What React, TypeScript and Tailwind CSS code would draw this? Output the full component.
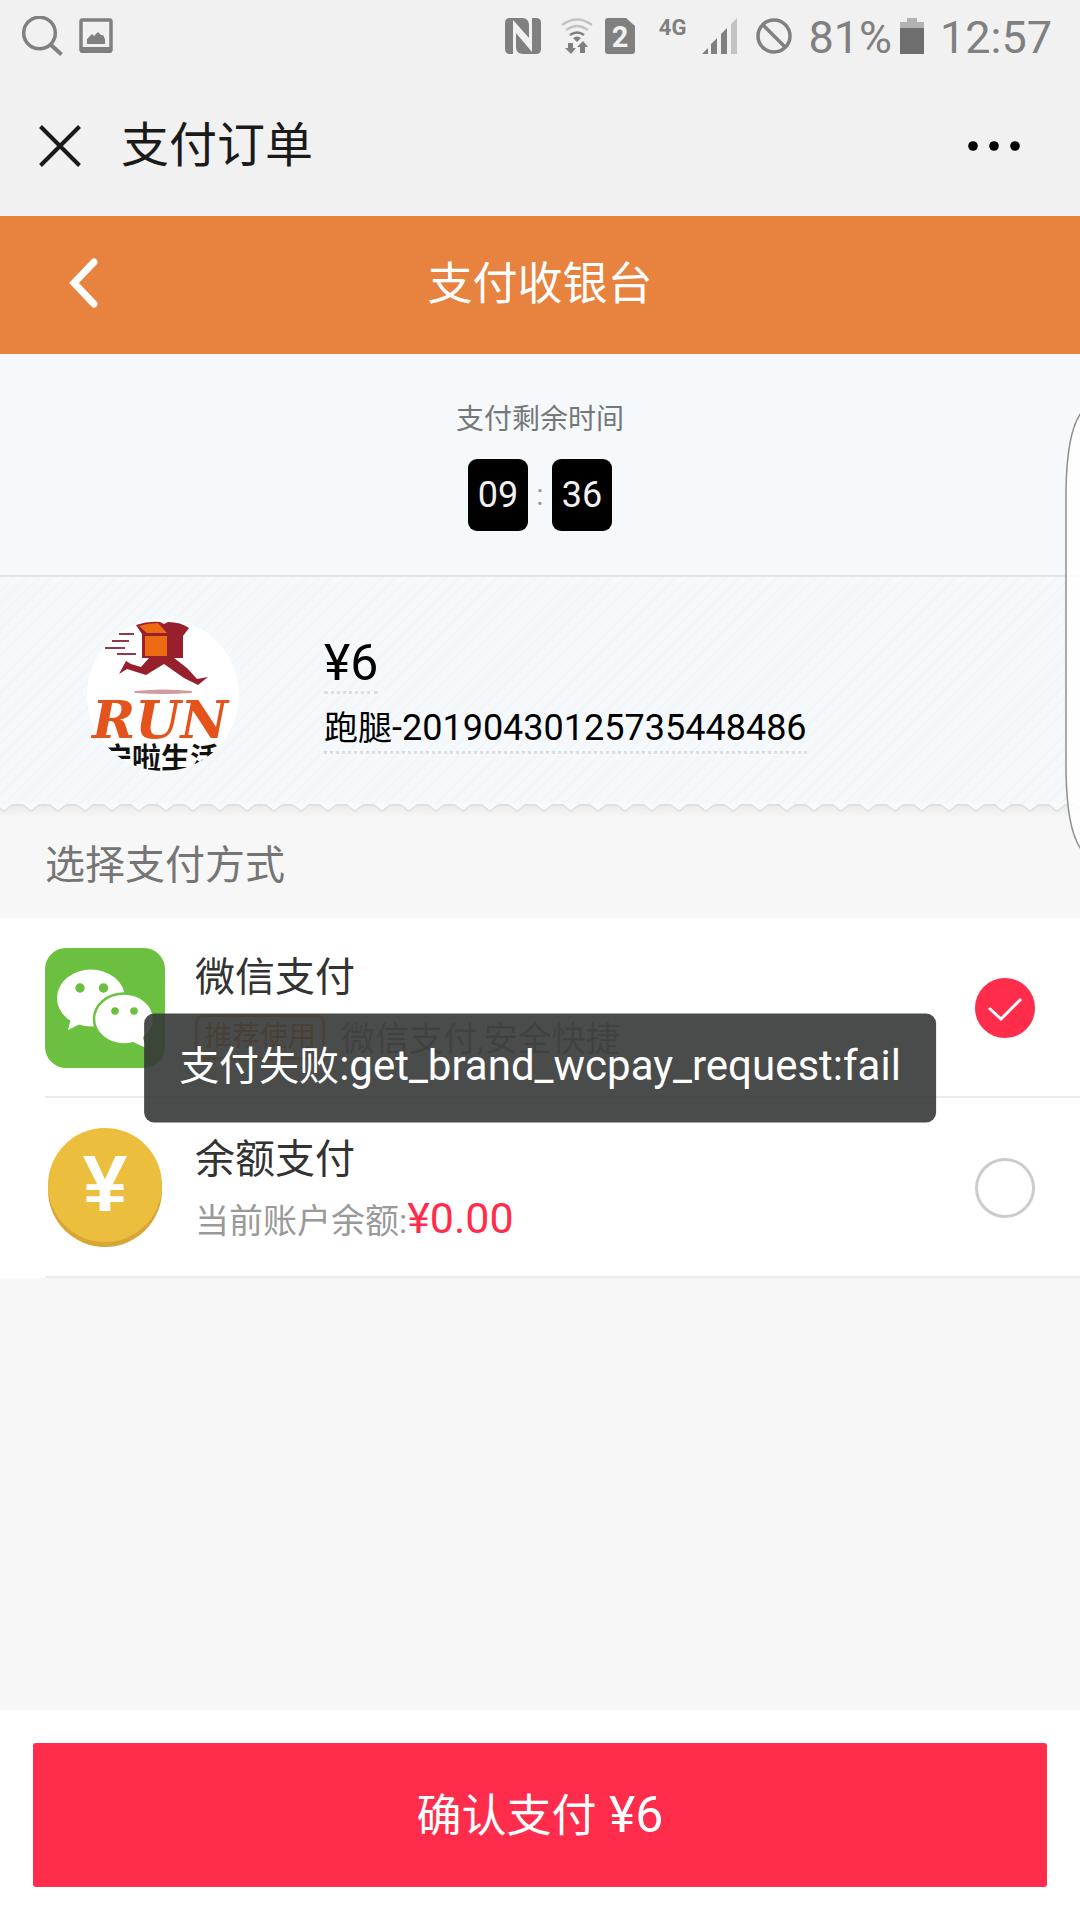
import React, { useState } from "react";

type Method = "wechat" | "balance";

function StatusBar() {
    return (
        <div className="flex h-[72px] items-center pr-7 pl-[21px] text-[#808080]">
            <svg className="h-10 w-[42px]" viewBox="0 0 42 40" fill="none" stroke="currentColor">
                <circle cx="18.500" cy="17" r="15.800" strokeWidth="3.500" />
                <path d="M30 29l10.500 9.500" strokeWidth="4" />
            </svg>
            <svg className="ml-4 h-9 w-[34px]" viewBox="0 0 34 36">
                <rect x="2" y="2" width="30" height="31" rx="1.500" fill="none" stroke="currentColor" strokeWidth="3.500" />
                <path fill="currentColor" d="M1 29h32v4q0 2-2 2H3q-2 0-2-2zM8 21l5-5 2 2 4-4 3 3h2l2 4v5H8z" />
            </svg>

            <div className="ml-auto flex items-center">
                {/* nfc */}
                <svg className="h-9 w-9" viewBox="0 0 36 36">
                    <path
                        fill="currentColor"
                        d="M5 0h13q6 1 6 7v13L8 2v34H5q-5 0-5-5V5q0-5 5-5zM27 0h4q5 0 5 5v26q0 5-5 5H18q-7 0-7-7V15l16 19z"
                    />
                </svg>
                {/* wifi with traffic arrows */}
                <svg className="ml-5 h-9 w-8" viewBox="0 0 32 36" fill="none" stroke="currentColor" strokeWidth="2.500">
                    <path d="M1 7q15-11 30 0M5 12q11-8 22 0" opacity="0.400" />
                    <path d="M9 17q7-5 14 0" />
                    <path d="M12 20q4-3 8 0l-4 4z" fill="currentColor" stroke="none" />
                    <path d="M7 25h5v5h3l-5 6-6-6h3zM19 35h5v-6h3l-5-6-6 6h3z" fill="currentColor" stroke="none" />
                </svg>
                <svg className="ml-3 h-9 w-[30px]" viewBox="0 0 30 36">
                    <path fill="currentColor" d="M3 0h18l9 8v25q0 3-3 3H3q-3 0-3-3V3q0-3 3-3z" />
                    <text x="15" y="29" textAnchor="middle" fill="#f1f1f1" className="font-['Roboto',sans-serif] text-[29px] font-bold">
                        2
                    </text>
                </svg>
                <span className="mb-4 ml-6 text-[22px] leading-6 font-bold">4G</span>
                <svg className="ml-4 h-9 w-9" viewBox="0 0 36 36" fill="currentColor">
                    <path d="M0 36l6-6v6zM9 26l6-6v16H9zM19 16l6-6v26h-6z" />
                    <path d="M29 6l6-6v36h-6z" opacity="0.400" />
                </svg>
                <svg className="ml-[18px] h-9 w-9" viewBox="0 0 36 36" fill="none" stroke="currentColor" strokeWidth="3.500">
                    <circle cx="18" cy="18" r="16" />
                    <path d="M7 7l22 22" />
                </svg>
                <span className="mt-1 ml-4 text-[45px] leading-[48px]">81%</span>
                <svg className="ml-2 h-9 w-6" viewBox="0 0 24 36">
                    <path fill="#b2b2b2" d="M7 0h10v4h7v8H0V4h7z" />
                    <path fill="#6e6e6e" d="M0 10h24v26H0z" />
                </svg>
                <span className="mt-1 ml-4 text-[45px] leading-[48px]">12:57</span>
            </div>
        </div>
    );
}

function TitleBar() {
    return (
        <header className="flex h-36 items-center px-[39px] pt-[3px] text-black">
            <button aria-label="关闭">
                <svg className="size-[42px]" viewBox="0 0 42 42" stroke="#1a1a1a" strokeWidth="4">
                    <path d="M1.500 1.500l39 39M40.500 1.500l-39 39" />
                </svg>
            </button>
            <h1 className="ml-10 text-[48px] leading-[60px] text-[#1a1a1a]">支付订单</h1>
            <button aria-label="更多" className="ml-auto pr-5">
                <svg className="h-3 w-[54px]" viewBox="0 0 54 12">
                    <circle cx="6" cy="6" r="4.800" />
                    <circle cx="27" cy="6" r="4.800" />
                    <circle cx="48" cy="6" r="4.800" />
                </svg>
            </button>
        </header>
    );
}

function RunLogo() {
    return (
        <svg className="size-[152px]" viewBox="0 0 152 152" role="img" aria-label="RUN">
            <defs>
                <clipPath id="logoClip">
                    <circle cx="76" cy="76" r="76" />
                </clipPath>
            </defs>
            <circle cx="76" cy="76" r="76" fill="#fff" />
            <path stroke="#8f3a44" strokeWidth="2" d="M32 15h15M25 22h17M18 29h20M30 35h19" />
            {/* open parcel */}
            <path fill="#97202c" d="M49 6q12-4 24-3l4 2 4-2q13 0 21 6l-6 8v22H55V15z" />
            <path fill="#ee6a12" d="M58 17h22v20H58zM52 7q9-3 19-3l9 10H60z" />
            {/* legs */}
            <path
                fill="#97202c"
                d="M32 55l7-13 5 3 10 3 8-9h25l13 10 10 11 11-2-10 8-14-7-20-14-18 11-19-6z"
            />
            <path fill="#d39ba0" d="M47 72q29-3 58 0 0 2-1 2-28 2-56 0z" />
            <text x="5" y="119" fill="#e4531c" className="font-['DejaVu_Serif',serif] text-[52px] font-bold italic">
                RUN
            </text>
            <g clipPath="url(#logoClip)">
                <text x="16" y="150" fill="#111" className="font-['Noto_Sans_CJK_SC',sans-serif] text-[29px] font-bold">
                    宁啦生活
                </text>
            </g>
        </svg>
    );
}

function Countdown() {
    return (
        <section className="flex h-[223px] flex-col items-center border-b-2 border-[#e0e4e7] bg-[#f5f9fc] pt-[45px] text-[#757777]">
            <p className="text-[28px] leading-[42px]">支付剩余时间</p>
            <div className="mt-[18px] flex items-center text-[36px] leading-[72px]">
                <span className="w-[60px] rounded-[9px] bg-black text-center text-[#f1f1f1]">09</span>
                <span className="w-6 text-center text-[30px] text-[#999]">:</span>
                <span className="w-[60px] rounded-[9px] bg-black text-center text-[#f1f1f1]">36</span>
            </div>
        </section>
    );
}

function OrderInfo() {
    return (
        <section className="flex h-[227px] items-center bg-[repeating-linear-gradient(135deg,#f2f6f9_0px,#f2f6f9_2px,#f5f9fc_2px,#f5f9fc_9px)] pt-2 pl-[87px] text-black">
            <RunLogo />
            <div className="ml-[85px] flex flex-col items-start">
                <p className="border-b-3 border-dotted border-[#dcdfe0] text-[50px] leading-[55px]">¥6</p>
                <p className="border-b-3 border-dotted border-[#dcdfe0] pt-3 text-[36px] leading-[45px]">
                    <span className="text-[34px]">跑腿</span>-20190430125735448486
                </p>
            </div>
        </section>
    );
}

// torn ticket edge under the order
function TornEdge() {
    return (
        <svg className="block h-3 w-full" aria-hidden="true">
            <defs>
                <linearGradient id="edgeShade" x1="0" y1="0" x2="0" y2="1">
                    <stop offset="0" stopColor="#e9e9e9" />
                    <stop offset="1" stopColor="#f6f6f6" />
                </linearGradient>
                <pattern id="tooth" x="17" width="27" height="12" patternUnits="userSpaceOnUse">
                    <path d="M0 1h6q3 1 5 4 3 4 6 0 2-3 5-4h5" fill="#f8fafb" stroke="#e0e0e0" strokeWidth="2" />
                    <path d="M6 0h16l-5 4q-3 3-6 0z" fill="#f8fafb" />
                </pattern>
            </defs>
            <rect width="100%" height="12" fill="url(#edgeShade)" />
            <rect width="100%" height="12" fill="url(#tooth)" />
        </svg>
    );
}

function WechatIcon() {
    return (
        <svg className="size-[120px] shrink-0" viewBox="0 0 120 120" aria-hidden="true">
            <rect width="120" height="120" rx="21" fill="#6bc13f" />
            <ellipse cx="46" cy="50" rx="34" ry="28.500" fill="#fff" />
            <path d="M26 70l-3 12 14-7z" fill="#fff" />
            <circle cx="35" cy="40" r="4.700" fill="#6bc13f" />
            <circle cx="58.500" cy="40" r="4.700" fill="#6bc13f" />
            <ellipse cx="79" cy="71" rx="30" ry="25.500" fill="#fff" stroke="#6bc13f" strokeWidth="2.500" />
            <path d="M86 93l15 7-4-14z" fill="#fff" />
            <circle cx="70" cy="63" r="3.800" fill="#6bc13f" />
            <circle cx="89" cy="63" r="3.800" fill="#6bc13f" />
        </svg>
    );
}

function CoinIcon() {
    return (
        <svg className="size-[120px] shrink-0" viewBox="0 0 120 120" aria-hidden="true">
            <circle cx="60" cy="62" r="57" fill="#d9a635" />
            <circle cx="60" cy="57" r="57" fill="#ecbe3d" />
            <text x="60" y="83" textAnchor="middle" fill="#fff" className="font-['Liberation_Sans',sans-serif] text-[80px] font-bold">
                ¥
            </text>
        </svg>
    );
}

interface OptionProps {
    value: Method;
    title: string;
    icon: React.ReactNode;
    checked: boolean;
    onSelect: (value: Method) => void;
    children: React.ReactNode;
}

function PayOption({ value, title, icon, checked, onSelect, children }: OptionProps) {
    return (
        <label className="ml-[45px] flex h-[180px] items-center border-b-2 border-[#ececec] pt-[2px] pr-[45px]">
            {icon}
            <div className="ml-[30px] flex-1">
                <p className="pt-1 text-[40px] leading-[58px] text-[#333]">{title}</p>
                {children}
            </div>
            <span className="grid size-[60px] shrink-0 place-items-center">
                <input
                    type="radio"
                    name="method"
                    value={value}
                    checked={checked}
                    onChange={() => onSelect(value)}
                    className="col-start-1 row-start-1 size-[60px] appearance-none rounded-full border-3 border-[#ccc] checked:border-[#ff2d4b] checked:bg-[#ff2d4b]"
                />
                {checked && (
                    <svg className="pointer-events-none col-start-1 row-start-1 size-[60px]" viewBox="0 0 60 60" fill="none" stroke="#fff" strokeWidth="3">
                        <path d="M14 30l12 11 20-20" />
                    </svg>
                )}
            </span>
        </label>
    );
}

// handle of the phone's edge panel
function EdgeHandle() {
    return (
        <svg className="absolute top-[192px] right-0 h-[446px] w-[15px]" viewBox="0 0 15 446" aria-hidden="true">
            <path
                d="M16 5Q2 24 1 82V364Q2 422 16 441"
                fill="#fff"
                fillOpacity="0.850"
                stroke="#8d908f"
                strokeWidth="1.500"
            />
        </svg>
    );
}

export default function App() {
    const [method, setMethod] = useState<Method>("wechat");

    return (
        <div className="flex min-h-screen flex-col bg-[#f1f1f1] font-['Roboto','Noto_Sans_CJK_SC',sans-serif]">
            <StatusBar />
            <TitleBar />

            <main className="relative flex flex-1 flex-col bg-[#f7f7f7]">
                <div className="grid h-[138px] grid-cols-[1fr_auto_1fr] items-center bg-[#e7823f] text-white">
                    <button aria-label="返回" className="ml-[66px] justify-self-start">
                        <svg className="h-[54px] w-9" viewBox="0 0 36 54" fill="none" stroke="currentColor" strokeWidth="7" strokeLinecap="round">
                            <path d="M28 4L8 25l20 21" />
                        </svg>
                    </button>
                    <h2 className="text-[45px] leading-[60px]">支付收银台</h2>
                </div>

                <Countdown />
                <OrderInfo />
                <TornEdge />

                <h3 className="pt-[26px] pb-7 pl-[45px] text-[40px] leading-[48px] text-[#757575]">选择支付方式</h3>

                <div className="bg-white">
                    <PayOption value="wechat" title="微信支付" icon={<WechatIcon />} checked={method === "wechat"} onSelect={setMethod}>
                        <p className="flex h-16 items-center text-[34px] text-[#999]">
                            <span className="mr-4 mb-1 rounded-[9px] border-3 border-[#f5a04c] px-[6px] text-[28px] leading-[40px] text-[#f58220]">
                                推荐使用
                            </span>
                            微信支付,安全快捷
                        </p>
                    </PayOption>
                    <PayOption value="balance" title="余额支付" icon={<CoinIcon />} checked={method === "balance"} onSelect={setMethod}>
                        <p className="text-[34px] leading-[58px] text-[#999]">
                            当前账户余额:<span className="text-[43px] text-[#ff2d4b]">¥0.00</span>
                        </p>
                    </PayOption>
                </div>

                <div className="mt-auto bg-white p-[33px]">
                    <button className="h-36 w-full rounded-[3px] bg-[#ff2d4b] text-[50px] text-white">
                        <span className="text-[45px]">确认支付</span> ¥6
                    </button>
                </div>

                <div
                    role="alert"
                    className="absolute top-1/2 left-1/2 -translate-x-1/2 -translate-y-1/2 rounded-[10px] bg-[#363837]/90 px-[35px] pt-[22px] pb-[26px] text-[42px] leading-[60px] whitespace-nowrap text-white"
                >
                    <span className="text-[40px]">支付失败</span>:get_brand_wcpay_request:fail
                </div>

                <EdgeHandle />
            </main>
        </div>
    );
}
